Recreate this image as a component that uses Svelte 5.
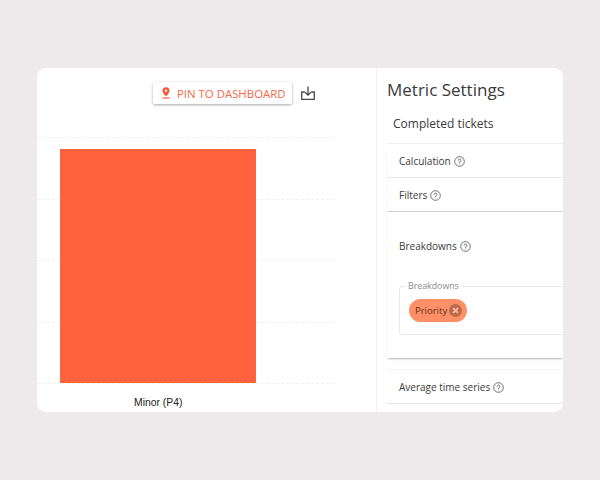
<script>
  const gridRows = [0, 1, 2, 3];
</script>

{#snippet help()}
  <svg class="help" viewBox="0 0 24 24" fill="none" stroke="#555" stroke-width="1.800" aria-hidden="true">
    <circle cx="12" cy="12" r="10.500" />
    <path d="M9 9.500a3 3 0 1 1 4.600 2.500c-1 .7-1.600 1.300-1.600 2.500" stroke-linecap="round" />
    <circle cx="12" cy="17.600" r="1" fill="#555" stroke="none" />
  </svg>
{/snippet}

<div class="page">
  <main class="card">
    <section class="chart-panel">
      <div class="toolbar">
        <button class="pin">
          <svg class="pin-icon" viewBox="0 0 12 14" aria-hidden="true">
            <path fill="#f4583a" fill-rule="evenodd" d="M6 0a4.200 4.200 0 0 1 4.200 4.200C10.200 7 6 11 6 11S1.800 7 1.800 4.200A4.200 4.200 0 0 1 6 0Zm0 2.800a1.400 1.400 0 1 0 0 2.800 1.400 1.400 0 0 0 0-2.800Z" />
            <rect x="1.800" y="12.300" width="8.400" height="1.400" fill="#f4583a" />
          </svg>
          PIN TO DASHBOARD
        </button>
        <svg class="download" viewBox="0 0 16 16" fill="none" stroke="#4a4a4a" stroke-width="1.300" aria-hidden="true">
          <path d="M8 1.500v8.500M5 7.200 8 10.200 11 7.200" />
          <path d="M4.800 7H1.700v7.300h12.600V7h-3.100" />
        </svg>
      </div>
      <div class="plot">
        {#each gridRows as row (row)}
          <div class="grid-row"></div>
        {/each}
        <div class="bar"></div>
      </div>
      <div class="x-label">Minor (P4)</div>
    </section>

    <aside class="settings">
      <h1>Metric Settings</h1>
      <h2>Completed tickets</h2>

      <div class="group">
        <div class="row">Calculation {@render help()}</div>
        <div class="row">Filters {@render help()}</div>
      </div>

      <div class="group breakdowns">
        <div class="breakdown-title">Breakdowns {@render help()}</div>
        <fieldset>
          <legend>Breakdowns</legend>
          <span class="chip">
            Priority
            <svg class="chip-x" viewBox="1 1 14 14" aria-hidden="true">
              <circle cx="8" cy="8" r="7" fill="#b9694c" />
              <path d="M5.300 5.300l5.400 5.400M10.700 5.300l-5.400 5.400" stroke="#f8b49c" stroke-width="2" />
            </svg>
          </span>
        </fieldset>
      </div>

      <div class="group last">
        <div class="row">Average time series {@render help()}</div>
      </div>
    </aside>
  </main>
</div>

<style>
  :global(body) {
    margin: 0;
    background: #eeeaeb;
  }

  .page {
    width: 600px;
    height: 480px;
    box-sizing: border-box;
    padding: 68px 37px;
    font-family: "Open Sans", sans-serif;
    color: #3a3a3a;
  }

  .card {
    display: flex;
    height: 344px;
    background: #fff;
    border-radius: 9px;
    overflow: hidden;
  }

  .chart-panel {
    width: 339px;
    flex: none;
    border-right: 1px solid #f0f0f0;
  }

  .toolbar {
    display: flex;
    align-items: center;
    height: 22px;
    margin: 14px 0 0 116px;
    gap: 8px;
  }

  .pin {
    display: flex;
    align-items: center;
    gap: 6px;
    height: 22px;
    width: 139px;
    flex: none;
    box-sizing: border-box;
    padding: 0 0 0 8px;
    border: 0;
    border-radius: 2px;
    background: #fff;
    box-shadow: 0 1px 3px rgba(0, 0, 0, 0.35);
    color: #f4694c;
    font: 400 11.400px "Open Sans", sans-serif;
    white-space: nowrap;
  }

  .pin-icon {
    width: 10px;
    height: 12px;
    flex: none;
  }

  .download {
    width: 16px;
    height: 16px;
    flex: none;
  }

  .plot {
    position: relative;
    width: 297px;
    height: 247px;
    margin-top: 33px;
    box-sizing: border-box;
    border-bottom: 1px dashed #edf2f2;
  }

  .grid-row {
    height: 60.500px;
    border-top: 1px dashed #edf2f2;
  }

  .bar {
    position: absolute;
    left: 23px;
    top: 12px;
    width: 196px;
    height: 234px;
    background: #ff623d;
  }

  .x-label {
    margin: 13px 0 0 97px;
    font: 400 10.400px "Liberation Sans", sans-serif;
    color: #222;
  }

  .settings {
    flex: 1;
    min-width: 0;
    padding-left: 10px;
  }

  h1 {
    margin: 10px 0 0;
    font-size: 17px;
    line-height: 24px;
    font-weight: 400;
  }

  h2 {
    margin: 13px 0 0 6px;
    font-size: 12px;
    line-height: 17px;
    font-weight: 400;
  }

  .group {
    margin-top: 11px;
    background: #fff;
    border-top: 1px solid #f0f0f0;
    box-shadow: 0 2px 2px -1px rgba(0, 0, 0, 0.3);
  }

  .row {
    display: flex;
    align-items: center;
    gap: 3px;
    height: 33px;
    padding-left: 12px;
    font-size: 10px;
    border-bottom: 1px solid #e6e6e6;
  }

  .row:last-child {
    border-bottom: 0;
  }

  .help {
    width: 11px;
    height: 11px;
    flex: none;
    margin-top: 1px;
  }

  .breakdowns {
    margin-top: 1px;
    height: 145px;
    border-top: 0;
    padding: 1px 0 0 12px;
  }

  .breakdown-title {
    display: flex;
    align-items: center;
    gap: 3px;
    height: 16px;
    margin-top: 25px;
    font-size: 10px;
  }

  fieldset {
    height: 54px;
    box-sizing: border-box;
    margin: 27px -20px 0 0;
    padding: 6px 0 0 9px;
    border: 1px solid #e8e8e8;
    border-radius: 3px;
  }

  legend {
    padding: 0 3px;
    margin-left: -4px;
    font-size: 8.800px;
    line-height: 10px;
    color: #8a8a8a;
  }

  .chip {
    display: inline-flex;
    align-items: center;
    gap: 2px;
    height: 23px;
    padding: 0 5px 0 6px;
    border-radius: 12px;
    background: #ff8f66;
    color: #5a2f20;
    font-size: 9.500px;
  }

  .chip-x {
    width: 13px;
    height: 13px;
    flex: none;
  }

  .last {
    margin-top: 11px;
    box-shadow: none;
    border-bottom: 1px solid #e6e6e6;
    border-top: 1px solid #f6f6f6;
  }
</style>
